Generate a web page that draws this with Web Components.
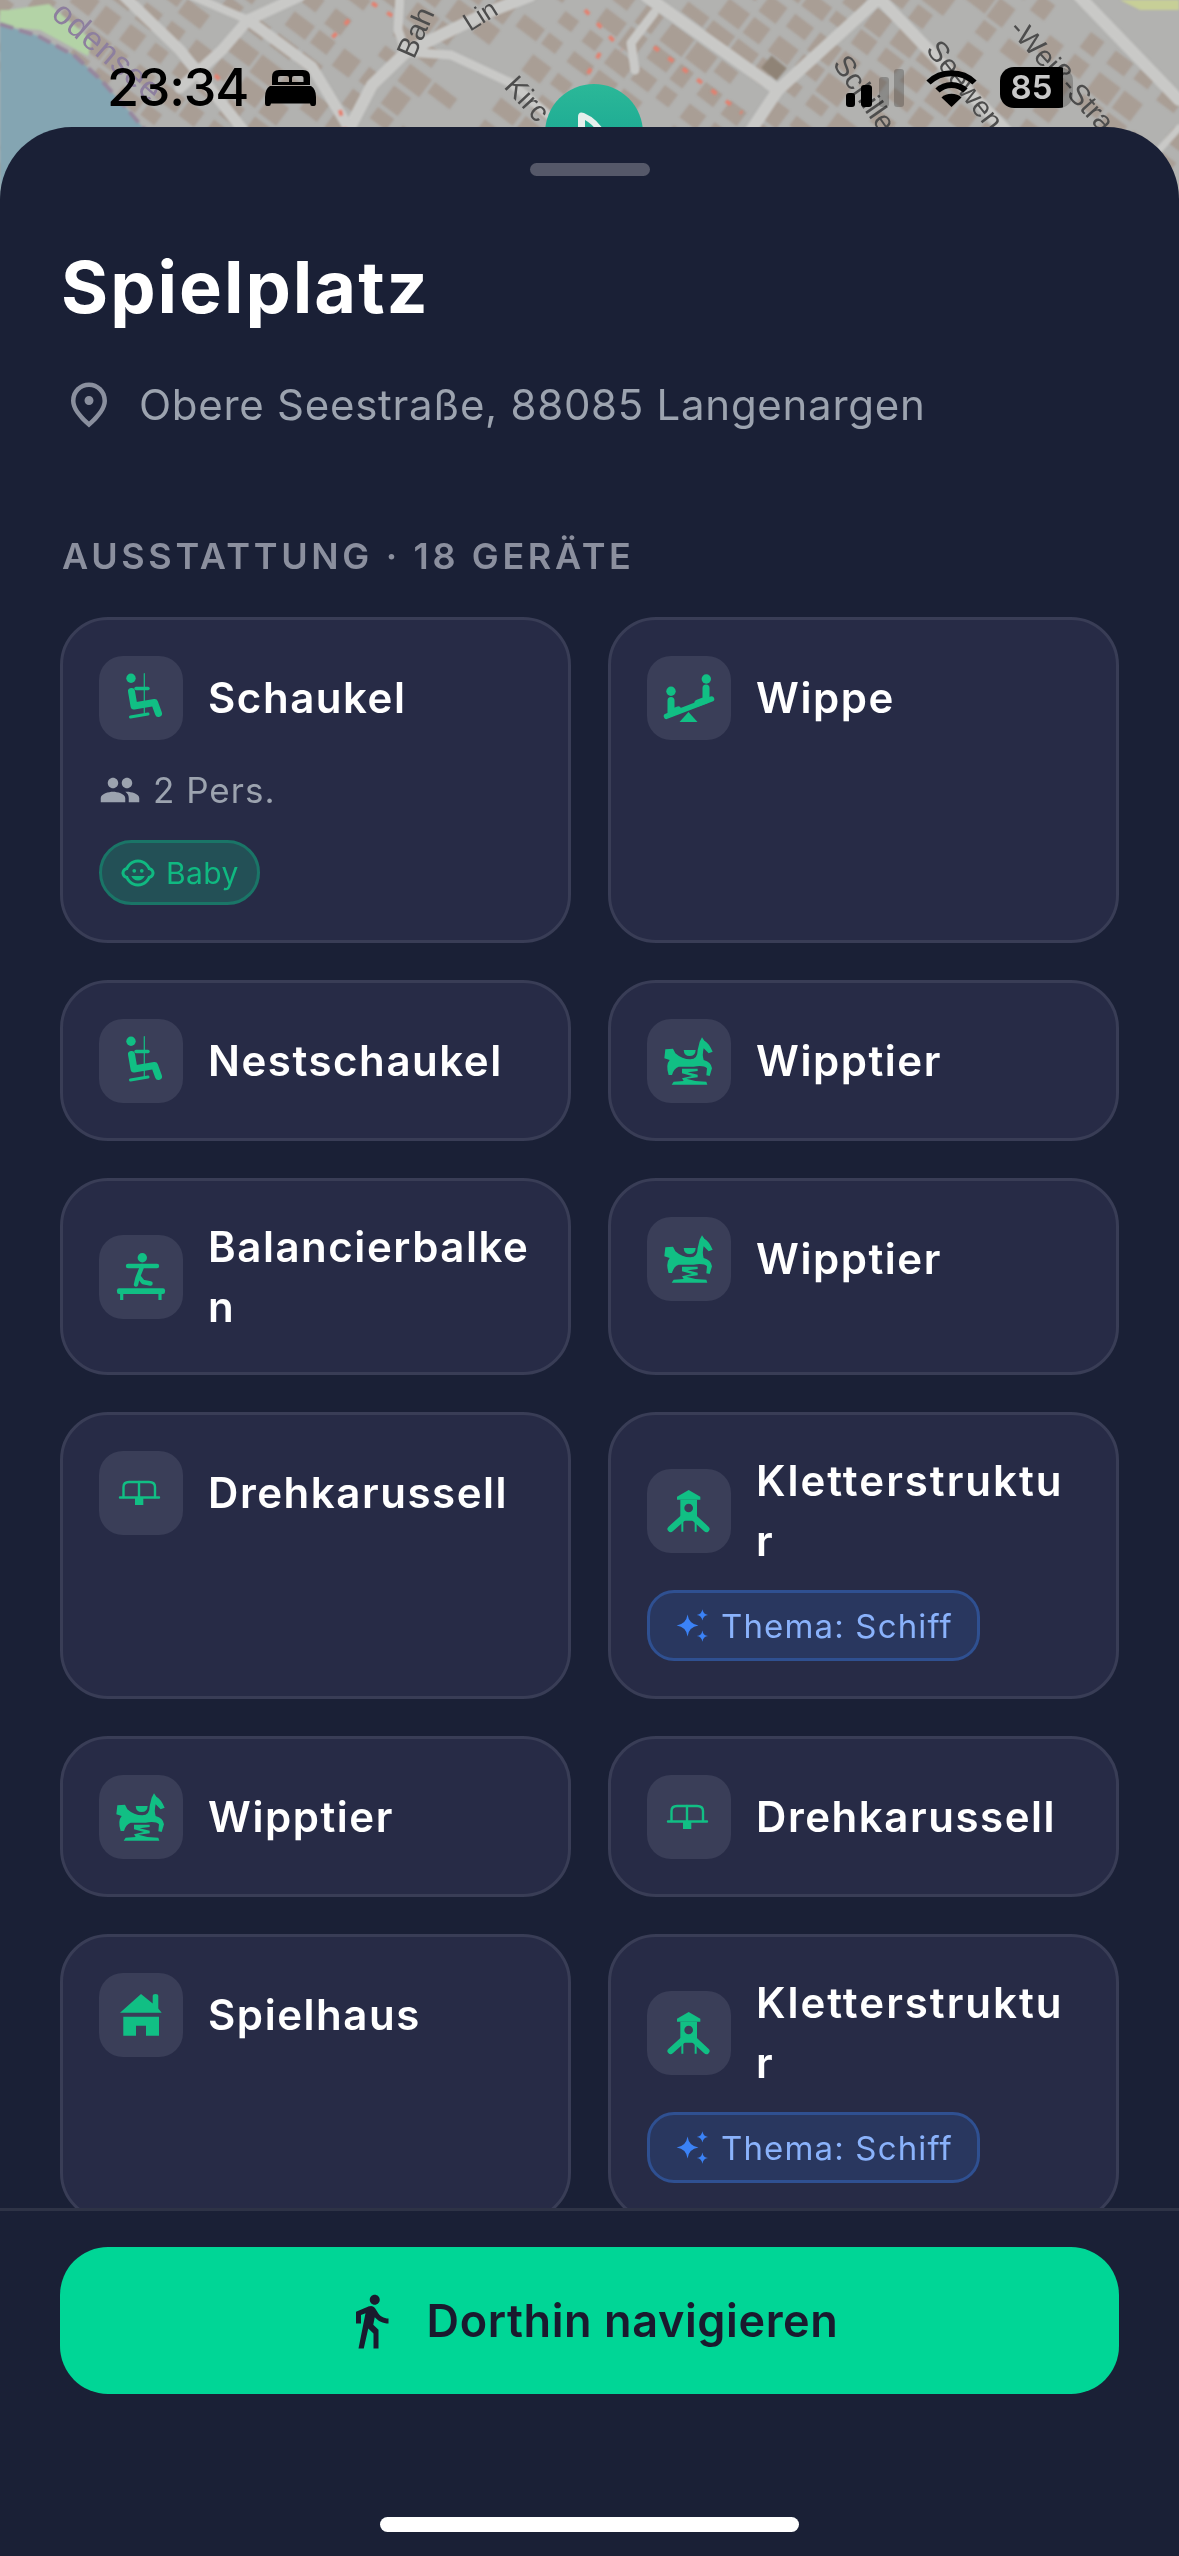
<!DOCTYPE html>
<html lang="de"><head><meta charset="utf-8"><title>Spielplatz</title>
<style>html,body{margin:0;padding:0;background:#1a2036;font-family:Inter,"Noto Sans",sans-serif}</style>
</head><body>
<app-screen>
  <map-backdrop slot="map"></map-backdrop>
  <status-bar slot="status"></status-bar>
  <bottom-sheet title-text="Spielplatz" address="Obere Seestraße, 88085 Langenargen" section="Ausstattung · 18 Geräte">
    <play-card name="Schaukel" icon="swing">
      <people-row>2 Pers.</people-row>
      <tag-badge kind="green">Baby</tag-badge>
    </play-card>
    <play-card name="Wippe" icon="seesaw"></play-card>
    <play-card name="Nestschaukel" icon="swing"></play-card>
    <play-card name="Wipptier" icon="horse"></play-card>
    <play-card name="Balancierbalken" icon="balance"></play-card>
    <play-card name="Wipptier" icon="horse"></play-card>
    <play-card name="Drehkarussell" icon="carousel"></play-card>
    <play-card name="Kletterstruktur" icon="tower" narrow><tag-badge kind="blue">Thema: Schiff</tag-badge></play-card>
    <play-card name="Wipptier" icon="horse"></play-card>
    <play-card name="Drehkarussell" icon="carousel"></play-card>
    <play-card name="Spielhaus" icon="house"></play-card>
    <play-card name="Kletterstruktur" icon="tower" narrow><tag-badge kind="blue">Thema: Schiff</tag-badge></play-card>
    <nav-button slot="footer">Dorthin navigieren</nav-button>
  </bottom-sheet>
</app-screen>
<script>
const ICONS={
swing:`<svg viewBox="0 0 84 84" fill="none" stroke="currentColor" stroke-linecap="round" stroke-linejoin="round"><circle cx="32" cy="22.3" r="4.7" fill="currentColor" stroke="none"/><path d="M45.3 17.700V57.700" stroke-width="1.200"/><path d="M37 32.500H49" stroke-width="3.400"/><path d="M32.500 35.500L35 50L55.500 46.500L59.500 57.500" stroke-width="7"/><path d="M31.500 61L49 58" stroke-width="3"/></svg>`,
seesaw:`<svg viewBox="0 0 84 84" fill="none" stroke="currentColor" stroke-linecap="round" stroke-linejoin="round"><circle cx="24" cy="35.300" r="4.700" fill="currentColor" stroke="none"/><circle cx="59.300" cy="23" r="4.700" fill="currentColor" stroke="none"/><path d="M19.500 60.300L64.500 43" stroke-width="5.500"/><path d="M24 44.500V57L31 54" stroke-width="7"/><path d="M59 32V44L51 47" stroke-width="7"/><path d="M32.500 66H50.500L41.500 56Z" fill="currentColor" stroke="none"/></svg>`,
horse:`<svg viewBox="20 57 252 252" fill="currentColor"><path d="M75 148L98 146L105 160Q125 178 150 178Q172 178 172 150L178 125L185 112L192 122Q205 128 217 155L205 160L190 145Q185 165 190 180Q212 185 215 205L208 228L198 226L200 205Q190 195 160 200L115 200Q100 205 95 225L85 225Q75 195 88 180L72 175Z"/><path d="M130 150H166Q165 168 148 168Q131 168 130 150Z"/><path d="M125 206L172 206V213L142 217L172 224V232L138 236L165 243L198 245L201 254H94L100 245L130 243L125 235L155 228L125 220Z"/></svg>`,
balance:`<svg viewBox="0 0 84 84" fill="none" stroke="currentColor" stroke-linecap="round" stroke-linejoin="round"><circle cx="43.300" cy="22.700" r="4.700" fill="currentColor" stroke="none"/><path d="M29 31H58" stroke-width="4.400"/><path d="M43.300 31L38.500 43L37 49.500" stroke-width="4.400"/><path d="M40 42L44 47L51.500 48.500" stroke-width="4.400"/><rect x="18" y="53.300" width="48" height="5.800" rx="2" fill="currentColor" stroke="none"/><path d="M22.700 59V65M61 59V65" stroke-width="3.200" stroke-linecap="butt"/></svg>`,
carousel:`<svg viewBox="0 0 84 84" fill="none" stroke="currentColor" stroke-width="2.400" stroke-linecap="round" stroke-linejoin="round"><path d="M24.500 46V36Q24.500 31 30 31H50Q56 31 56 36V46"/><path d="M40 31V46M21 46.500H60"/><rect x="36" y="46.500" width="8.300" height="7.500" fill="currentColor" stroke="none"/></svg>`,
tower:`<svg viewBox="80 87 252 252"><g fill="currentColor"><path d="M170 170L205 150L240 170V179H170Z"/><path fill-rule="evenodd" d="M180 179H230V242H180ZM205 191A13 13 0 1 0 205 217A13 13 0 1 0 205 191Z"/></g><path d="M190 232L151 267M220 232L258 267" stroke="currentColor" stroke-width="19" stroke-linecap="round" fill="none"/><path d="M186 245V275M226 245V275" stroke="currentColor" stroke-width="6" fill="none"/></svg>`,
house:`<svg viewBox="0 0 84 84" fill="currentColor"><path d="M42 21L53.700 30.500V23Q53.700 21 56.500 21Q59.300 21 59.300 23V35.500L62.700 39.700H21Z"/><path fill-rule="evenodd" d="M24.300 43.700H60V62.700H47V52.700H37V62.700H24.300Z"/></svg>`
};
function def(name,css,html,init){
  customElements.define(name,class extends HTMLElement{
    constructor(){super();const r=this.attachShadow({mode:'open'});r.innerHTML=`<style>${css}</style>${typeof html==='function'?'':html}`;}
    connectedCallback(){
      if(typeof html==='function'&&!this._d){this._d=1;const t=document.createElement('template');t.innerHTML=html(this);this.shadowRoot.appendChild(t.content);}
      if(init&&!this._i){this._i=1;init(this);}
    }
  });
}
def('app-screen',`:host{display:flex;flex-direction:column;position:relative;width:1179px;height:2556px;overflow:hidden;background:#1a2036;font-family:Inter,"Noto Sans",sans-serif}
.sheet{flex:1;min-height:0;display:flex;flex-direction:column;position:relative}`,
`<slot name="map"></slot><slot name="status"></slot><div class="sheet"><slot></slot></div>`);

def('map-backdrop',`:host{position:absolute;left:0;top:0;width:1179px;height:220px;display:block;overflow:hidden;background:#b2b2b0}
svg{display:block;width:1179px;height:220px}
text{font-family:"Liberation Sans",sans-serif}`,
`<svg viewBox="0 0 1179 220"><defs><filter id="b"><feGaussianBlur stdDeviation="1"/></filter><linearGradient id="m" x1="0" y1="0" x2="0" y2="1"><stop offset="0" stop-color="#2bb898"/><stop offset="1" stop-color="#12a090"/></linearGradient></defs>
<g id="bld" filter="url(#b)" fill="#a99e95"></g>
<g filter="url(#b)">
<path d="M0 10L8 10L49 4L92 40L88 56L40 30L0 26Z" fill="#b3d3a6"/>
<path d="M0 24L38 36L75 56L101 80L128 110L150 136L0 220Z" fill="#84a5b2"/>
<path d="M0 24L38 36L75 56L101 80L128 110L150 136" fill="none" stroke="#96869d" stroke-width="4" stroke-dasharray="14 6"/>
<g fill="none" stroke="#c9c9c7" stroke-linecap="round" stroke-linejoin="round">
<path stroke-width="12" d="M346 135L372 85L406 52L489 12L530 -4"/>
<path stroke-width="9" d="M406 52L398 30L400 -5"/>
<path stroke-width="9" d="M406 52L451 55L511 83L560 125"/>
<path stroke-width="11" d="M124 -4L180 50L243 130"/>
<path stroke-width="11" d="M300 -4L248 20L222 50L180 88"/>
<path stroke-width="11" d="M248 20L312 67L350 130"/>
<path stroke-width="8" d="M190 -5L248 20"/>
<path stroke-width="12" d="M646 -4L778 90L748 135"/>
<path stroke-width="12" d="M778 90L879 -2L1010 135"/>
<path stroke-width="9" d="M654 13L631 43L635 70"/>
<path stroke-width="12" d="M1079 -4L1179 100"/>
<path stroke-width="7" d="M1179 128L1150 160"/>
</g>
<rect x="764" y="60" width="20" height="16" transform="rotate(40 774 68)" fill="#8f8376"/>
<g fill="none" stroke="#e4806f" stroke-width="4" stroke-dasharray="6 12">
<path d="M585 10L622 50"/><path d="M654 47L742 113"/><path d="M600 53L586 77"/><path d="M349 20L330 40"/><path d="M372 3L394 17"/><path d="M340 110L345 130"/><path d="M215 75L222 82"/>
</g>
<path d="M1120 0H1179V10H1140Z" fill="#c7cf97"/>
</g>
<g font-size="29">
<text transform="translate(50 16) rotate(41)" fill="#8d7f9e" font-size="33" letter-spacing="1">odensee</text>
<text transform="translate(414 60) rotate(-66)" fill="#4d4d4d">Bah</text>
<text transform="translate(470 32) rotate(-32)" fill="#4d4d4d" font-size="26">Lin</text>
<text transform="translate(503 87) rotate(47)" fill="#4d4d4d">Kirc</text>
<text transform="translate(832 64) rotate(55)" fill="#4d4d4d">Schiller</text>
<text transform="translate(925 50) rotate(52)" fill="#4d4d4d">Seewen</text>
<text transform="translate(1008 30) rotate(48)" fill="#4d4d4d">-Weiß-Stra</text>
</g>
<circle cx="594" cy="133" r="49" fill="url(#m)"/>
<path fill-rule="evenodd" d="M578 132V117Q578 111 584 113Q598 119 606 134ZM585 130H596Q592 124 585 120Z" fill="#e6efec"/>
</svg>`,
(el)=>{
  const g=el.shadowRoot.getElementById('bld');let s=17;const rnd=()=>(s=(s*16807)%2147483647)/2147483647;
  let out='';
  for(let i=-4;i<48;i++)for(let j=-22;j<24;j++){
    if(rnd()<.2)continue;
    const u=i*31,v=j*27;const a=.64;
    const x=u*Math.cos(a)-v*Math.sin(a)+40,y=u*Math.sin(a)+v*Math.cos(a)-10;
    if(y<-30||y>170||x<-30||x>1210)continue;
    const w=16+rnd()*12,h=12+rnd()*11;
    out+=`<rect x="${x.toFixed(1)}" y="${y.toFixed(1)}" width="${w.toFixed(1)}" height="${h.toFixed(1)}" transform="rotate(37 ${x.toFixed(1)} ${y.toFixed(1)})"/>`;
  }
  g.innerHTML=out;
});

def('status-bar',`:host{display:flex;position:relative;height:127px;box-sizing:border-box;padding:67px 106px 0 107px;align-items:flex-start;justify-content:space-between;color:#000}
.l,.r{display:flex;align-items:center}
.t{font:500 52px/42px Inter,sans-serif;letter-spacing:-1.200px;width:158px}
svg{display:block}
.bat{width:73px;height:41px;border-radius:14px;display:flex;align-items:center;justify-content:center;box-sizing:border-box;padding-right:10px;background:linear-gradient(to right,#000 86%,rgba(0,0,0,.22) 86%);color:#c9c9c9;font:600 33px/41px Inter,sans-serif}
`,
`<div class="l"><div class="t">23:34</div><svg width="51" height="36" viewBox="0 0 51 36"><path fill-rule="evenodd" fill="currentColor" d="M7 15V7Q7 0 14 0H38Q45 0 45 7V15ZM15 6Q13 6 13 8V12H24V8Q24 6 22 6ZM29 6Q27 6 27 8V12H38.500V8Q38.500 6 36.500 6Z"/><path fill="currentColor" d="M5 16H46Q51 19 51 27V33Q51 36 49 36H47Q45.500 36 45 33.500H6Q5.500 36 4 36H2Q0 36 0 33V27Q0 19 5 16Z"/></svg></div>
<div class="r"><svg width="58" height="38" viewBox="0 0 58 38" style="margin-right:22px"><rect x="0" y="24" width="9" height="14" rx="3"/><rect x="15" y="16" width="11" height="22" rx="3"/><rect x="33" y="8" width="10" height="30" rx="3" opacity=".22"/><rect x="48" y="0" width="10" height="38" rx="3" opacity=".22"/></svg>
<svg width="51" height="38" viewBox="0 0 51 38" style="margin-right:23px" fill="none" stroke="#000" stroke-width="6"><path d="M2.500 13.500C15 1 36 1 48.500 13.500"/><path d="M11.500 21.500C19 14 32 14 39.500 21.500"/><path d="M25.500 38L15.500 28.500C20 23.500 31 23.500 35.500 28.500Z" fill="#000" stroke="none"/></svg>
<div class="bat">85</div></div>`);

def('bottom-sheet',`:host{flex:1;min-height:0;display:flex;flex-direction:column;background:#1a2036;border-radius:72px 72px 0 0;position:relative;overflow:hidden}
.handle{width:120px;height:13px;border-radius:7px;background:#555869;margin:36px auto 0;flex:none}
.scroll{flex:1;min-height:0;overflow:hidden;padding:0 60px}
h1{margin:67px 0 0 1px;font:700 72px/88px Inter,sans-serif;color:#fff;letter-spacing:2px}
.addr{display:flex;align-items:center;gap:23px;margin:47px 0 0 2px;color:#9ca3af;font:400 42px/54px Inter,sans-serif;letter-spacing:.72px}
.addr svg{flex:none;display:block}
h2{margin:102px 0 0 2px;font:600 36px/44px Inter,sans-serif;color:#8b8f9e;letter-spacing:3.650px;text-transform:uppercase}
.grid{display:grid;grid-template-columns:511px 511px;gap:37px;margin-top:39px}
.foot{flex:none;border-top:3px solid #2e3346;padding:36px 60px 0;height:348px;box-sizing:border-box}
.home{position:absolute;left:380px;bottom:24px;width:419px;height:15px;border-radius:8px;background:#fff}
`,
(el)=>`<div class="handle"></div><div class="scroll"><h1>${el.getAttribute('title-text')}</h1>
<div class="addr"><svg width="54" height="54" viewBox="0 0 24 24" fill="#8a8f9e"><path d="M12 12c-1.100 0-2-.900-2-2s.900-2 2-2 2 .900 2 2-.900 2-2 2zm6-1.800C18 6.570 15.350 4 12 4s-6 2.570-6 6.200c0 2.340 1.950 5.440 6 9.140 4.050-3.700 6-6.800 6-9.140zM12 2c4.200 0 8 3.220 8 8.200 0 3.320-2.670 7.250-8 11.800-5.330-4.550-8-8.480-8-11.800C4 5.220 7.800 2 12 2z"/></svg><span>${el.getAttribute('address')}</span></div>
<h2>${el.getAttribute('section')}</h2><div class="grid"><slot></slot></div></div>
<div class="foot"><slot name="footer"></slot></div><div class="home"></div>`);

def('play-card',`:host{display:flex;flex-direction:column;box-sizing:border-box;min-width:0;padding:36px 36px 35px;background:#272b46;border:3px solid #393d56;border-radius:48px;color:#fff;font-family:Inter,sans-serif}
.head{display:flex;align-items:center;gap:25px}
.ic{flex:none;width:84px;height:84px;border-radius:24px;background:#3a3e58;color:#11bf84}
.ic svg{display:block;width:84px;height:84px}
.n{flex:1;min-width:0;font:600 42px/60px Inter,sans-serif;letter-spacing:1.550px;overflow-wrap:anywhere;color:#fff}
:host([narrow]) .n{flex:none;width:316px;letter-spacing:2px}
`,
(el)=>`<div class="head"><div class="ic">${ICONS[el.getAttribute('icon')]||''}</div><div class="n">${el.getAttribute('name')}</div></div><slot></slot>`);

def('people-row',`:host{display:flex;align-items:center;gap:12px;height:54px;margin-top:23px;color:#9ca3af;font:400 35px/54px Inter,sans-serif;letter-spacing:1px}
svg{display:block;flex:none}`,
`<svg width="42" height="42" viewBox="0 0 24 24" fill="currentColor"><path d="M16 11c1.660 0 2.990-1.340 2.990-3S17.660 5 16 5c-1.660 0-3 1.340-3 3s1.340 3 3 3zm-8 0c1.660 0 2.990-1.340 2.990-3S9.660 5 8 5C6.340 5 5 6.340 5 8s1.340 3 3 3zm0 2c-2.330 0-7 1.170-7 3.500V19h14v-2.500c0-2.330-4.670-3.500-7-3.500zm8 0c-.290 0-.620.020-.970.050 1.160.840 1.970 1.970 1.970 3.450V19h6v-2.500c0-2.330-4.670-3.500-7-3.500z"/></svg><span><slot></slot></span>`);

def('tag-badge',`:host{display:inline-flex;align-self:flex-start;align-items:center;box-sizing:border-box;border:3px solid}
:host([kind=green]){height:65px;margin-top:23px;padding:0 18px 0 18px;gap:10px;border-radius:33px;background:#235056;border-color:#1a7567;color:#10b981;font:400 30px/40px Inter,sans-serif;letter-spacing:.4px}
:host([kind=blue]){height:71px;margin-top:19px;padding:0 24px 0 26px;gap:12px;border-radius:27px;background:#29375f;border-color:#2f5091;color:#8ab2fb;font:400 33px/40px Inter,sans-serif;letter-spacing:1.150px}
svg{display:block;flex:none}`,
(el)=>(el.getAttribute('kind')==='green'
?`<svg width="36" height="36" viewBox="0 0 24 24" fill="currentColor"><circle cx="14.500" cy="10.500" r="1.250"/><circle cx="9.500" cy="10.500" r="1.250"/><path d="M22.940 11.340c-.250-1.510-1.360-2.740-2.810-3.170-.530-1.120-1.280-2.100-2.190-2.910C16.360 3.850 14.280 3 12 3s-4.360.850-5.940 2.260c-.920.810-1.670 1.800-2.190 2.910-1.450.430-2.560 1.650-2.810 3.170-.040.210-.060.430-.060.660 0 .230.020.450.060.660.250 1.510 1.360 2.740 2.810 3.170.520 1.110 1.270 2.090 2.170 2.890C7.620 20.140 9.710 21 12 21s4.380-.860 5.970-2.280c.900-.800 1.650-1.790 2.170-2.890 1.440-.430 2.550-1.650 2.800-3.170.040-.210.060-.430.060-.660 0-.230-.020-.450-.060-.660zM19 14c-.100 0-.190-.020-.290-.030-.200.670-.490 1.290-.860 1.860C16.600 17.740 14.450 19 12 19s-4.600-1.260-5.850-3.170c-.370-.570-.660-1.190-.860-1.860-.100.010-.190.030-.290.030-1.100 0-2-.900-2-2s.900-2 2-2c.100 0 .190.020.290.030.200-.670.490-1.290.860-1.860C7.400 6.260 9.550 5 12 5s4.600 1.260 5.850 3.170c.370.570.660 1.190.860 1.860.100-.010.190-.030.290-.030 1.100 0 2 .900 2 2s-.900 2-2 2zM12 17c2.010 0 3.740-1.230 4.500-3h-9c.760 1.770 2.490 3 4.500 3z"/></svg>`
:`<svg width="33" height="33" viewBox="165 505 100 100" fill="#3b82f6"><path d="M200 522Q204 551 233 555Q204 559 200 588Q196 559 167 555Q196 551 200 522Z"/><path d="M245 506Q247 521 262 523Q247 525 245 540Q243 525 228 523Q243 521 245 506Z"/><path d="M245 570Q247 585 262 587Q247 589 245 604Q243 589 228 587Q243 585 245 570Z"/></svg>`)+`<span><slot></slot></span>`);

def('nav-button',`:host{display:flex;align-items:center;justify-content:center;gap:26px;height:147px;border-radius:48px;background:#00d696;color:#1a1a2e;font:600 45px/60px Inter,sans-serif;letter-spacing:.6px}
svg{display:block;flex:none}`,
`<svg width="60" height="60" viewBox="0 0 24 24" fill="currentColor"><path d="M13.500 5.500c1.100 0 2-.900 2-2s-.900-2-2-2-2 .900-2 2 .900 2 2 2zM9.800 8.900L7 23h2.100l1.800-8 2.100 2v6h2v-7.500l-2.100-2 .600-3C14.800 12 16.800 13 19 13v-2c-1.900 0-3.500-1-4.300-2.400l-1-1.600c-.400-.600-1-1-1.700-1-.300 0-.500.100-.800.100L6 8.300V13h2V9.600l1.800-.700"/></svg><span><slot></slot></span>`);
</script>
</body></html>
